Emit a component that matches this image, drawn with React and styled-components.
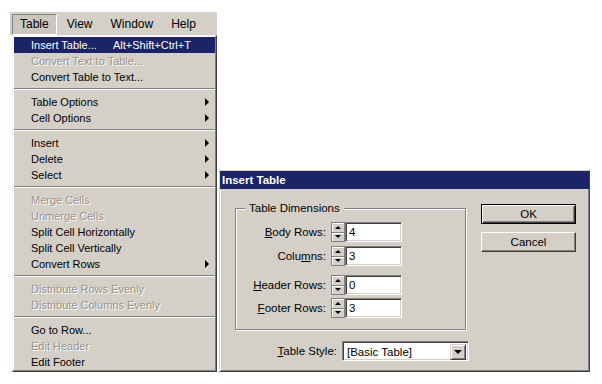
import React from "react";
import styled, { createGlobalStyle } from "styled-components";

const GRAY = "#d4d0c8";
const NAVY = "#1b2466";

const Global = createGlobalStyle`
  html, body { margin: 0; padding: 0; background: #fff; }
  body { font-family: "Liberation Sans", Arial, sans-serif; color: #000; }
  * { box-sizing: border-box; }
`;

const Page = styled.div`
  display: flex;
  align-items: flex-start;
  padding: 12px 0 0 10px;
  width: 602px;
  height: 384px;
  overflow: hidden;
`;

const MenuColumn = styled.div`
  width: 207px;
  display: flex;
  flex-direction: column;
`;

const MenuBar = styled.div`
  height: 23px;
  background: ${GRAY};
  display: flex;
  align-items: flex-end;
  gap: 2px;
  padding: 2px 2px 0 2px;
`;

const MenuTitle = styled.div`
  height: 21px;
  padding: 0 7px;
  font-size: 12px;
  line-height: 19px;
  border: 1px solid ${(p) => (p.$active ? "#808080" : "transparent")};
  border-right-color: ${(p) => (p.$active ? "#fff" : "transparent")};
  border-bottom-color: ${(p) => (p.$active ? "#fff" : "transparent")};
  background: ${(p) => (p.$active ? "#cbc7bf" : "transparent")};
`;

const Dropdown = styled.div`
  margin-left: 2px;
  width: 205px;
  background: ${GRAY};
  border: 1px solid;
  border-color: #f4f3ef #404040 #404040 #f4f3ef;
  box-shadow: inset -1px -1px 0 #808080, inset 1px 1px 0 #fff;
  padding: 1px;
  display: flex;
  flex-direction: column;
`;

const Item = styled.div`
  height: 16px;
  display: flex;
  align-items: center;
  padding: 0 6px 0 17px;
  font-size: 11px;
  line-height: 16px;
  background: ${(p) => (p.$hi ? NAVY : "transparent")};
  color: ${(p) => (p.$hi ? "#fff" : p.$disabled ? "#96938e" : "#000")};
  text-shadow: ${(p) => (p.$disabled ? "1px 1px 0 #fff" : "none")};
  white-space: nowrap;
`;

const ItemLabel = styled.span`
  min-width: 82px;
`;

const Shortcut = styled.span``;

const SubArrow = styled.span`
  margin-left: auto;
  width: 0;
  height: 0;
  border-left: 4px solid #000;
  border-top: 4px solid transparent;
  border-bottom: 4px solid transparent;
`;

const Separator = styled.div`
  margin: 3px 0 4px;
  height: 2px;
  border-top: 1px solid #808080;
  border-bottom: 1px solid #fff;
`;

const Dialog = styled.div`
  margin: 158px 0 0 2px;
  width: 371px;
  height: 202px;
  background: ${GRAY};
  border: 1px solid;
  border-color: ${GRAY} #404040 #404040 ${GRAY};
  box-shadow: inset 1px 1px 0 #fff, inset -1px -1px 0 #808080;
  display: flex;
  flex-direction: column;
`;

const TitleBar = styled.div`
  height: 18px;
  background: ${NAVY};
  color: #fff;
  font-weight: bold;
  font-size: 11.5px;
  line-height: 18px;
  padding-left: 2px;
`;

const DialogBody = styled.div`
  display: flex;
  flex: 1;
`;

const LeftCol = styled.div`
  padding: 13px 0 0 15px;
  display: flex;
  flex-direction: column;
`;

const RightCol = styled.div`
  margin-left: auto;
  padding: 15px 13px 0 0;
  display: flex;
  flex-direction: column;
  gap: 8px;
`;

const GroupBox = styled.fieldset`
  margin: 0;
  padding: 7px 0 11px 0;
  width: 231px;
  border: 1px solid #808080;
  box-shadow: inset 1px 1px 0 #fff, 1px 1px 0 #fff;
  min-inline-size: 0;
`;

const Legend = styled.legend`
  margin-left: 9px;
  padding: 0 4px;
  font-size: 11.5px;
  line-height: 13px;
  background: ${GRAY};
`;

const FieldRow = styled.div`
  display: flex;
  align-items: center;
  height: 20px;
  margin-top: ${(p) => p.$gap || 0}px;
`;

const Label = styled.label`
  width: ${(p) => p.$w || 90}px;
  text-align: right;
  font-size: 11.5px;
  margin-right: 5px;
  white-space: nowrap;
`;

const SpinBox = styled.div`
  width: 14px;
  height: 20px;
  display: flex;
  flex-direction: column;
  border: 1px solid #808080;
  background: ${GRAY};
`;

const SpinHalf = styled.div`
  flex: 1;
  display: flex;
  align-items: center;
  justify-content: center;
  border-top: ${(p) => (p.$down ? "1px solid #808080" : "none")};
  box-shadow: inset 1px 1px 0 #fff;
`;

const TriUp = styled.span`
  width: 0;
  height: 0;
  border-left: 3px solid transparent;
  border-right: 3px solid transparent;
  border-bottom: 3px solid #000;
`;

const TriDown = styled.span`
  width: 0;
  height: 0;
  border-left: ${(p) => p.$s || 3}px solid transparent;
  border-right: ${(p) => p.$s || 3}px solid transparent;
  border-top: ${(p) => p.$s || 3}px solid #000;
`;

const NumInput = styled.div`
  width: 57px;
  height: 20px;
  background: #fff;
  border: 1px solid;
  border-color: #808080 #fff #fff #808080;
  box-shadow: inset 1px 1px 0 #404040, inset -1px -1px 0 ${GRAY};
  font-size: 11.5px;
  line-height: 18px;
  padding-left: 3px;
`;

const StyleRow = styled.div`
  display: flex;
  align-items: center;
  margin-top: 11px;
  padding-left: 24px;
`;

const Select = styled.div`
  width: 127px;
  height: 20px;
  display: flex;
  background: #fff;
  border: 1px solid;
  border-color: #808080 #fff #fff #808080;
  box-shadow: inset 1px 1px 0 #404040, inset -1px -1px 0 ${GRAY};
  padding: 2px;
`;

const SelectText = styled.span`
  flex: 1;
  font-size: 11.5px;
  line-height: 16px;
  padding-left: 2px;
`;

const SelectButton = styled.div`
  width: 16px;
  height: 16px;
  background: ${GRAY};
  border: 1px solid;
  border-color: ${GRAY} #404040 #404040 ${GRAY};
  box-shadow: inset 1px 1px 0 #fff, inset -1px -1px 0 #808080;
  display: flex;
  align-items: center;
  justify-content: center;
`;

const Button = styled.div`
  width: 95px;
  height: 20px;
  background: ${GRAY};
  font-size: 11.5px;
  line-height: 18px;
  text-align: center;
  border: 1px solid;
  border-color: ${(p) => (p.$default ? "#000" : "#fff #404040 #404040 #fff")};
  box-shadow: ${(p) =>
    p.$default
      ? "inset 1px 1px 0 #fff, inset -1px -1px 0 #404040, inset -2px -2px 0 #808080"
      : "inset -1px -1px 0 #808080"};
`;

const menu = [
  { t: "Insert Table...", k: "Alt+Shift+Ctrl+T", hi: true },
  { t: "Convert Text to Table...", d: true },
  { t: "Convert Table to Text..." },
  "sep",
  { t: "Table Options", sub: true },
  { t: "Cell Options", sub: true },
  "sep",
  { t: "Insert", sub: true },
  { t: "Delete", sub: true },
  { t: "Select", sub: true },
  "sep",
  { t: "Merge Cells", d: true },
  { t: "Unmerge Cells", d: true },
  { t: "Split Cell Horizontally" },
  { t: "Split Cell Vertically" },
  { t: "Convert Rows", sub: true },
  "sep",
  { t: "Distribute Rows Evenly", d: true },
  { t: "Distribute Columns Evenly", d: true },
  "sep",
  { t: "Go to Row..." },
  { t: "Edit Header", d: true },
  { t: "Edit Footer" },
];

const Spinner = () => (
  <SpinBox>
    <SpinHalf>
      <TriUp />
    </SpinHalf>
    <SpinHalf $down>
      <TriDown />
    </SpinHalf>
  </SpinBox>
);

const fields = [
  { pre: "", u: "B", post: "ody Rows:", v: "4", gap: 0 },
  { pre: "Colu", u: "m", post: "ns:", v: "3", gap: 4 },
  { pre: "", u: "H", post: "eader Rows:", v: "0", gap: 9 },
  { pre: "", u: "F", post: "ooter Rows:", v: "3", gap: 3 },
];

export default function App() {
  return (
    <>
      <Global />
      <Page>
        <MenuColumn>
          <MenuBar>
            <MenuTitle $active>Table</MenuTitle>
            <MenuTitle>View</MenuTitle>
            <MenuTitle>Window</MenuTitle>
            <MenuTitle>Help</MenuTitle>
          </MenuBar>
          <Dropdown>
            {menu.map((m, i) =>
              m === "sep" ? (
                <Separator key={i} />
              ) : (
                <Item key={i} $hi={m.hi} $disabled={m.d}>
                  <ItemLabel>{m.t}</ItemLabel>
                  {m.k && <Shortcut>{m.k}</Shortcut>}
                  {m.sub && <SubArrow />}
                </Item>
              )
            )}
          </Dropdown>
        </MenuColumn>
        <Dialog>
          <TitleBar>Insert Table</TitleBar>
          <DialogBody>
            <LeftCol>
              <GroupBox>
                <Legend>Table Dimensions</Legend>
                {fields.map((f, i) => (
                  <FieldRow key={i} $gap={f.gap}>
                    <Label>
                      {f.pre}
                      <u>{f.u}</u>
                      {f.post}
                    </Label>
                    <Spinner />
                    <NumInput>{f.v}</NumInput>
                  </FieldRow>
                ))}
              </GroupBox>
              <StyleRow>
                <Label $w={78}>
                  <u>T</u>able Style:
                </Label>
                <Select>
                  <SelectText>[Basic Table]</SelectText>
                  <SelectButton>
                    <TriDown $s={4} />
                  </SelectButton>
                </Select>
              </StyleRow>
            </LeftCol>
            <RightCol>
              <Button $default>OK</Button>
              <Button>Cancel</Button>
            </RightCol>
          </DialogBody>
        </Dialog>
      </Page>
    </>
  );
}
